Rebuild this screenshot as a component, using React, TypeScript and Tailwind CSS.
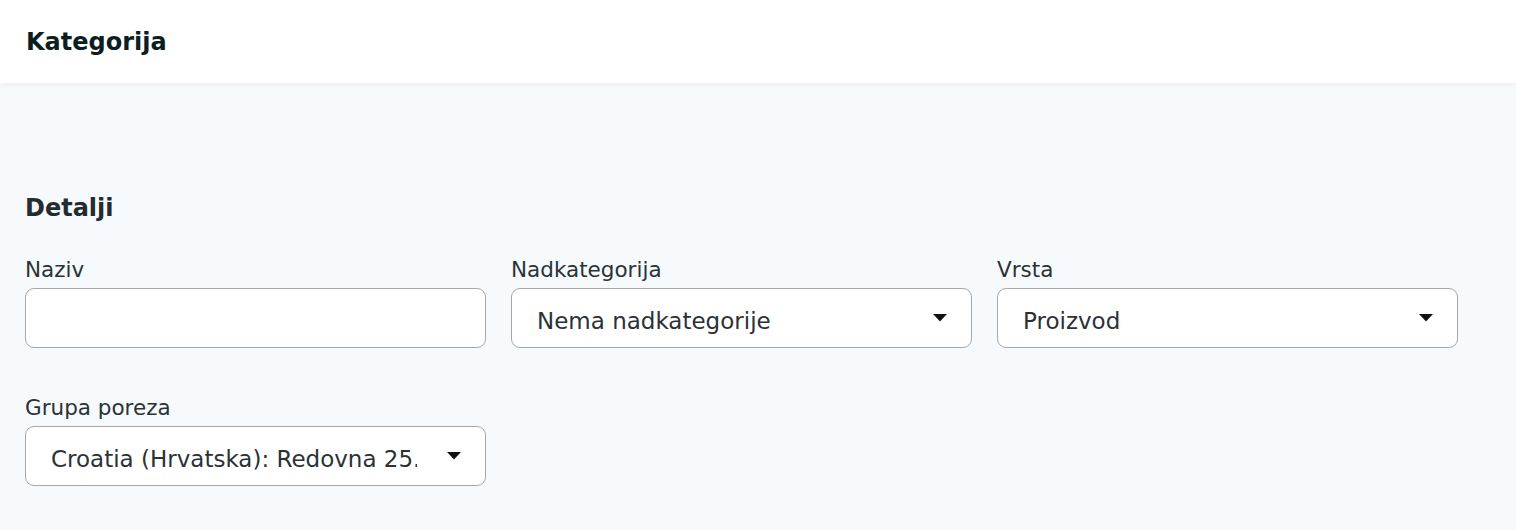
import React from 'react';

const Caret = () => (
  <svg width="14" height="8" viewBox="0 0 14 8" className="shrink-0">
    <path d="M0 0 H14 L7 7.5 Z" fill="#111" />
  </svg>
);

interface SelectBoxProps {
  value: string;
}

const SelectBox: React.FC<SelectBoxProps> = ({ value }) => (
  <div className="flex h-[60px] items-center rounded-[9px] border border-[#a3a8ad] bg-white pl-[25px] pr-[24px]">
    <span className="mr-[30px] flex-1 overflow-hidden whitespace-nowrap pt-[5px] text-[23px] leading-[30px] text-[#2b3236]">
      {value}
    </span>
    <Caret />
  </div>
);

const Field: React.FC<{ label: string; children: React.ReactNode }> = ({ label, children }) => (
  <div>
    <label className="mb-[6px] block text-[21.5px] leading-[24px] text-[#2b3236]">{label}</label>
    {children}
  </div>
);

export default function App() {
  return (
    <div className="min-h-[530px] bg-[#f7fafd]" style={{ fontFamily: '"DejaVu Sans", sans-serif' }}>
      <header className="flex h-[83px] items-center bg-white px-[26px] shadow-[0_1px_6px_rgba(30,50,80,0.08)]">
        <h1 className="text-[24px] font-bold text-[#0d1e22]">Kategorija</h1>
      </header>

      <main className="px-[25px] pt-[110px] pb-10">
        <h2 className="mb-[35px] text-[24px] font-bold leading-[30px] text-[#252c30]">Detalji</h2>

        <div className="grid w-[1433px] grid-cols-3 gap-x-[25px] gap-y-[48px]">
          <Field label="Naziv">
            <input
              type="text"
              className="h-[60px] w-full rounded-[9px] border border-[#a3a8ad] bg-white px-[25px] text-[23px] outline-none"
            />
          </Field>
          <Field label="Nadkategorija">
            <SelectBox value="Nema nadkategorije" />
          </Field>
          <Field label="Vrsta">
            <SelectBox value="Proizvod" />
          </Field>
          <Field label="Grupa poreza">
            <SelectBox value="Croatia (Hrvatska): Redovna 25.00%" />
          </Field>
        </div>
      </main>
    </div>
  );
}
